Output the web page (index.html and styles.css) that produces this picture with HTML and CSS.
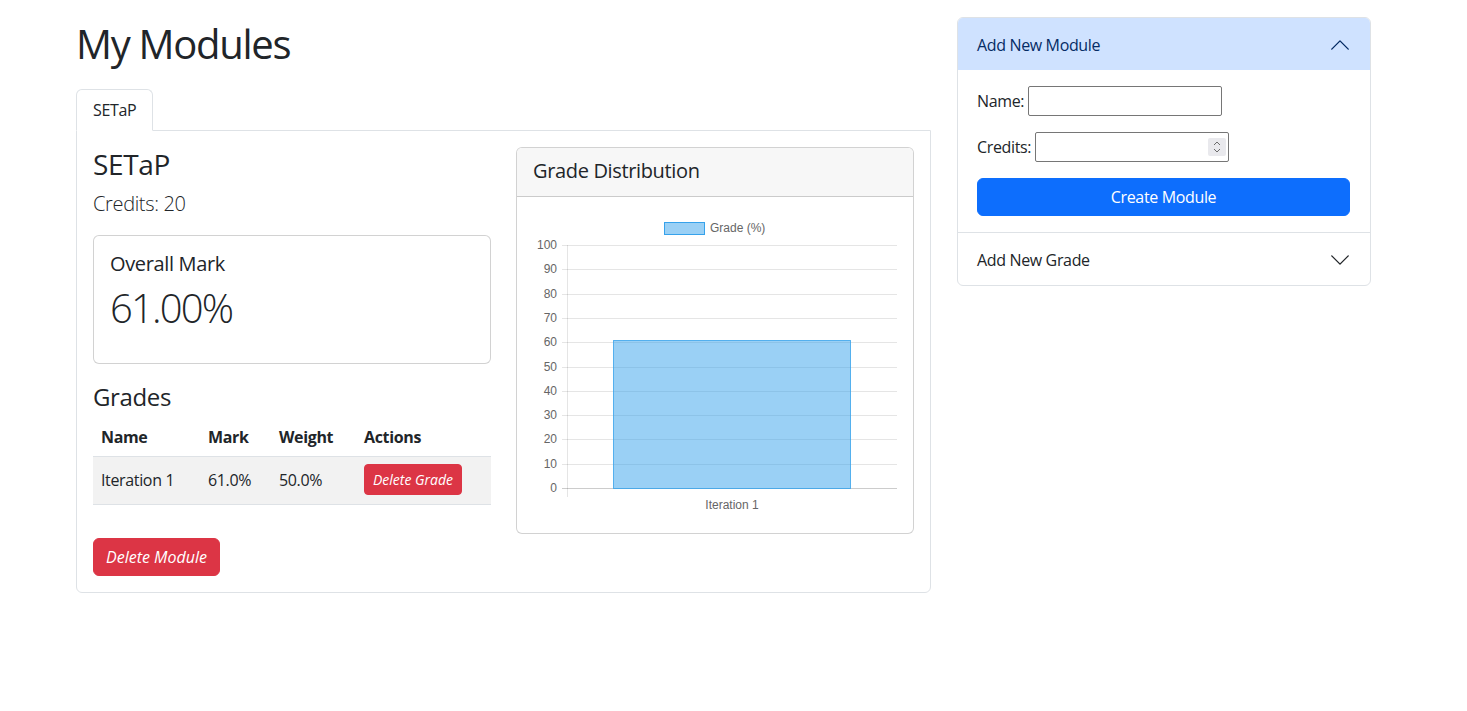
FILE: index.html
```html
<!DOCTYPE html>
<html lang="en">
<head>
<meta charset="utf-8">
<title>My Modules</title>
<link rel="stylesheet" href="styles.css">
</head>
<body>
<div class="page">
  <main class="main">
    <h1 class="title">My Modules</h1>
    <ul class="tabs">
      <li class="tab active">SETaP</li>
    </ul>
    <section class="tab-pane">
      <div class="pane-grid">
        <div class="col">
          <h3 class="mod-name">SETaP</h3>
          <p class="lead">Credits: 20</p>
          <div class="card mark-card">
            <h5 class="card-title">Overall Mark</h5>
            <p class="mark">61.00%</p>
          </div>
          <h4 class="grades-title">Grades</h4>
          <table class="grades">
            <colgroup>
              <col class="c-name"><col class="c-mark"><col class="c-weight"><col class="c-actions">
            </colgroup>
            <thead>
              <tr><th>Name</th><th>Mark</th><th>Weight</th><th>Actions</th></tr>
            </thead>
            <tbody>
              <tr>
                <td>Iteration 1</td><td>61.0%</td><td>50.0%</td>
                <td><button class="btn btn-danger btn-sm"><em>Delete Grade</em></button></td>
              </tr>
            </tbody>
          </table>
          <button class="btn btn-danger"><em>Delete Module</em></button>
        </div>
        <div class="col">
          <div class="card chart-card">
            <div class="card-header"><h5 class="card-head-title">Grade Distribution</h5></div>
            <div class="chart-body">
              <svg class="chart" width="364" height="304" viewBox="0 0 364 304">
                <rect x="131.5" y="9.5" width="40" height="12" fill="rgba(54,162,235,0.5)" stroke="rgb(54,162,235)" stroke-width="1"/>
                <text x="177" y="19" class="lbl">Grade (%)</text>
                <g stroke="rgba(0,0,0,0.1)" stroke-width="1">
                  <line x1="29" y1="32.5" x2="364" y2="32.5"/>
                  <line x1="29" y1="56.5" x2="364" y2="56.5"/>
                  <line x1="29" y1="81.5" x2="364" y2="81.5"/>
                  <line x1="29" y1="105.5" x2="364" y2="105.5"/>
                  <line x1="29" y1="129.5" x2="364" y2="129.5"/>
                  <line x1="29" y1="154.5" x2="364" y2="154.5"/>
                  <line x1="29" y1="178.5" x2="364" y2="178.5"/>
                  <line x1="29" y1="202.5" x2="364" y2="202.5"/>
                  <line x1="29" y1="226.5" x2="364" y2="226.5"/>
                  <line x1="29" y1="251.5" x2="364" y2="251.5"/>
                  <line x1="34.5" y1="32" x2="34.5" y2="284"/>
                </g>
                <line x1="29" y1="275.5" x2="364" y2="275.5" stroke="rgba(0,0,0,0.2)" stroke-width="1"/>
                <g class="lbl" text-anchor="end">
                  <text x="24" y="36">100</text>
                  <text x="24" y="60">90</text>
                  <text x="24" y="85">80</text>
                  <text x="24" y="109">70</text>
                  <text x="24" y="133">60</text>
                  <text x="24" y="158">50</text>
                  <text x="24" y="182">40</text>
                  <text x="24" y="206">30</text>
                  <text x="24" y="230">20</text>
                  <text x="24" y="255">10</text>
                  <text x="24" y="279">0</text>
                </g>
                <rect x="80.5" y="127.5" width="237" height="148" fill="rgba(54,162,235,0.5)" stroke="rgba(54,162,235,0.8)" stroke-width="1"/>
                <text x="199" y="296" class="lbl" text-anchor="middle">Iteration 1</text>
              </svg>
            </div>
          </div>
        </div>
      </div>
    </section>
  </main>
  <aside class="side">
    <div class="accordion">
      <div class="acc-item">
        <div class="acc-header open">
          <span>Add New Module</span>
          <svg class="chev" width="22" height="22" viewBox="0 0 16 16"><path d="M2 11L8 5L14 11" fill="none" stroke="#052c65" stroke-linecap="round" stroke-linejoin="round"/></svg>
        </div>
        <div class="acc-body">
          <div class="field">
            <label class="field-label" for="mname">Name:</label>
            <input id="mname" class="inp" type="text">
          </div>
          <div class="field">
            <label class="field-label" for="mcredits">Credits:</label>
            <span class="num-wrap">
              <input id="mcredits" class="inp" type="number">
              <span class="spin">
                <svg width="10" height="14" viewBox="0 0 10 14"><path d="M2 5L5 2L8 5M2 9L5 12L8 9" fill="none" stroke="#6b6b6b" stroke-width="1"/></svg>
              </span>
            </span>
          </div>
          <button class="btn btn-primary btn-block">Create Module</button>
        </div>
      </div>
      <div class="acc-item">
        <div class="acc-header">
          <span>Add New Grade</span>
          <svg class="chev" width="22" height="22" viewBox="0 0 16 16"><path d="M2 5L8 11L14 5" fill="none" stroke="#212529" stroke-linecap="round" stroke-linejoin="round"/></svg>
        </div>
      </div>
    </div>
  </aside>
</div>
</body>
</html>
```

FILE: styles.css
```css
* { box-sizing: border-box; }
html, body { margin: 0; padding: 0; }
body {
  font-family: "Open Sans", "Noto Sans", sans-serif;
  font-size: 16px;
  line-height: 1.5;
  letter-spacing: -0.022em;
  color: #212529;
  background: #fff;
}

.page {
  display: flex;
  align-items: flex-start;
  gap: 26px;
  padding: 17px 0 0 76px;
}
.main { width: 855px; }
.side { width: 414px; }

.title {
  font-size: 40px;
  font-weight: 400;
  line-height: 48px;
  letter-spacing: -0.032em;
  margin: 3px 0 21px;
}

.tabs {
  list-style: none;
  margin: 0;
  padding: 0;
  display: flex;
}
.tab {
  position: relative;
  z-index: 1;
  margin-bottom: -1px;
  padding: 8px 16px;
  border: 1px solid #dee2e6;
  border-bottom-color: #fff;
  border-radius: 6px 6px 0 0;
  background: #fff;
  font-size: 16px;
  line-height: 24px;
}

.tab-pane {
  border: 1px solid #dee2e6;
  border-radius: 0 0 6px 6px;
  padding: 16px;
}
.pane-grid {
  display: grid;
  grid-template-columns: 1fr 1fr;
  gap: 25px;
  align-items: start;
}

.mod-name {
  font-size: 28px;
  font-weight: 400;
  line-height: 34px;
  margin: 0 0 8px;
}
.lead {
  font-size: 20px;
  font-weight: 300;
  line-height: 30px;
  margin: 0 0 16px;
}

.card {
  border: 1px solid rgba(0, 0, 0, 0.175);
  border-radius: 6px;
  background: #fff;
}
.mark-card {
  padding: 16px;
  margin-bottom: 18px;
}
.card-title {
  font-size: 20px;
  font-weight: 400;
  line-height: 24px;
  margin: 0 0 8px;
}
.mark {
  font-size: 40px;
  font-weight: 300;
  line-height: 48px;
  letter-spacing: -0.045em;
  margin: 0 0 15px;
}

.grades-title {
  font-size: 24px;
  font-weight: 400;
  line-height: 29px;
  margin: 0 0 6px;
}

.grades {
  width: 100%;
  border-collapse: collapse;
  margin-bottom: 33px;
}
.c-name { width: 107px; }
.c-mark { width: 71px; }
.c-weight { width: 85px; }
.grades th, .grades td {
  padding: 8px;
  text-align: left;
  vertical-align: middle;
  border-bottom: 1px solid #dee2e6;
  line-height: 24px;
}
.grades th { font-weight: 700; padding: 8px 8px 7px; }
.grades td { padding: 7px 8px 9px; }
.grades tbody tr { background: #f2f2f2; }

.btn {
  display: inline-block;
  font-family: inherit;
  font-size: 16px;
  line-height: 24px;
  letter-spacing: 0;
  padding: 6px 12px;
  border: 1px solid transparent;
  border-radius: 6px;
  cursor: pointer;
}
.btn em { font-style: italic; }
.btn-sm {
  font-size: 14px;
  line-height: 21px;
  padding: 4px 8px;
  border-radius: 4px;
}
.btn-danger { background: #dc3545; border-color: #dc3545; color: #fff; }
.btn-primary { background: #0d6efd; border-color: #0d6efd; color: #fff; letter-spacing: -0.022em; }
.btn-block { display: block; width: 100%; }

.chart-card { overflow: hidden; }
.card-header {
  background: #f7f7f7;
  border-bottom: 1px solid rgba(0, 0, 0, 0.175);
  padding: 12px 16px;
}
.card-head-title {
  font-size: 20px;
  font-weight: 400;
  line-height: 24px;
  margin: -1px 0 1px;
}
.chart-body { padding: 16px; }
.chart { display: block; letter-spacing: 0; }
.lbl {
  font-family: "Liberation Sans", Arial, sans-serif;
  font-size: 12px;
  fill: #666;
}

.accordion {
  border: 1px solid #dee2e6;
  border-radius: 6px;
  overflow: hidden;
}
.acc-item + .acc-item { border-top: 1px solid #dee2e6; }
.acc-header {
  display: flex;
  align-items: center;
  justify-content: space-between;
  height: 52px;
  padding: 2px 20px 0 19px;
  font-size: 16px;
}
.acc-header.open {
  background: #cfe2ff;
  color: #052c65;
}
.chev { display: block; margin-right: -1px; }
.acc-body { padding: 16px 20px 16px 19px; }

.field {
  display: flex;
  align-items: center;
  height: 30px;
  margin-bottom: 16px;
}
.field-label { margin-right: 4px; }
.inp {
  width: 194px;
  height: 30px;
  border: 1px solid #767676;
  border-radius: 2px;
  padding: 1px 2px;
  font-family: inherit;
  font-size: 14px;
  background: #fff;
}
.inp::-webkit-inner-spin-button,
.inp::-webkit-outer-spin-button { -webkit-appearance: none; margin: 0; }
.num-wrap { position: relative; display: block; height: 30px; }
.spin {
  position: absolute;
  right: 3px;
  top: 6px;
  width: 18px;
  height: 18px;
  background: #e9e9ed;
  border-radius: 2px;
  display: flex;
  align-items: center;
  justify-content: center;
}
.spin svg { display: block; }
```
